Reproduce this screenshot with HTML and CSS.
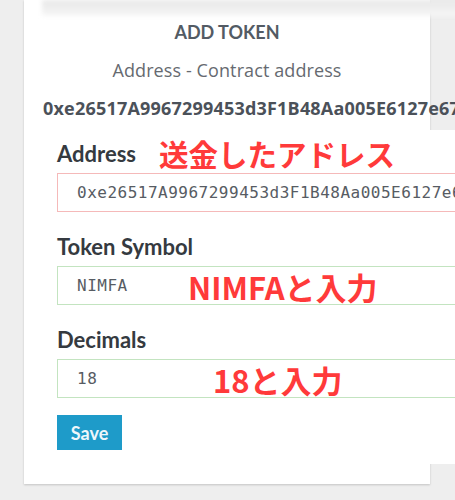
FILE: index.html
```html
<!DOCTYPE html>
<html lang="ja">
<head>
    <meta charset="UTF-8">
    <meta name="viewport" content="width=device-width, initial-scale=1.0">
    <title>Add Token</title>
    <link rel="stylesheet" href="styles.css">
</head>
<body>
    <div class="card">
        <div class="card-top"></div>
        <h1 class="title">ADD TOKEN</h1>
        <p class="subtitle">Address - Contract address</p>
        <p class="contract">0xe26517A9967299453d3F1B48Aa005E6127e67a3f</p>

        <form class="token-form">
            <div class="field">
                <div class="field-head">
                    <label>Address</label>
                    <span class="note">送金したアドレス</span>
                </div>
                <div class="input input-red">0xe26517A9967299453d3F1B48Aa005E6127e67a3f</div>
            </div>

            <div class="field">
                <div class="field-head">
                    <label>Token Symbol</label>
                </div>
                <div class="input input-green">
                    NIMFA
                    <span class="note note-symbol">NIMFAと入力</span>
                </div>
            </div>

            <div class="field">
                <div class="field-head">
                    <label>Decimals</label>
                </div>
                <div class="input input-green">
                    18
                    <span class="note note-decimals">18と入力</span>
                </div>
            </div>

            <button type="button" class="save-btn">Save</button>
        </form>
    </div>
</body>
</html>
```

FILE: styles.css
```css
body {
    margin: 0;
    background-color: #eeeeee;
    font-family: "Open Sans", Arial, sans-serif;
    overflow: hidden;
    height: 500px;
}
.card {
    margin-left: 24px;
    width: 406px;
    height: 484px;
    background-color: white;
    box-shadow: 0 1px 2px rgba(0, 0, 0, 0.18);
}
.card-top {
    height: 16px;
    margin-left: 18px;
    margin-right: -30px;
    background: linear-gradient(to bottom, #e8e8e8, #f1f1f1 70%, #f8f8f8);
    filter: blur(2px);
}
.title {
    margin: 4px 0 0;
    line-height: 24px;
    font-family: Lato, sans-serif;
    font-weight: 700;
    font-size: 18px;
    color: #535b64;
    text-align: center;
}
.subtitle {
    margin: 14px 0 0;
    line-height: 24px;
    font-size: 18px;
    letter-spacing: 0.1px;
    color: #666a70;
    text-align: center;
}
.contract {
    margin: 14px 0 0 19px;
    line-height: 24px;
    font-size: 18px;
    font-weight: 700;
    letter-spacing: 0.2px;
    color: #4b5159;
    white-space: nowrap;
}
.token-form {
    margin-top: 10px;
    margin-right: -40px;
    padding: 6px 0 14px 33px;
    background-color: white;
}
.field {
    margin-bottom: 17px;
}
.field-head {
    display: flex;
    align-items: center;
    height: 34px;
    margin-bottom: 3px;
}
.field-head label {
    font-family: Lato, sans-serif;
    font-weight: 700;
    font-size: 22px;
    color: #353a40;
}
.note {
    font-family: "Noto Sans CJK JP", sans-serif;
    font-weight: 700;
    font-size: 29.5px;
    color: #ff3a3a;
    margin-left: 23px;
}
.input {
    position: relative;
    display: flex;
    align-items: center;
    box-sizing: border-box;
    height: 39px;
    width: 430px;
    padding-left: 19px;
    font-family: "DejaVu Sans Mono", monospace;
    font-size: 16px;
    letter-spacing: 0.5px;
    color: #575c63;
    white-space: nowrap;
    overflow: hidden;
}
.input-red {
    border: 1.5px solid #f5b9b9;
}
.input-green {
    border: 1.5px solid #c3e4c0;
}
.note-symbol,
.note-decimals {
    position: absolute;
    top: 50%;
    transform: translateY(-50%);
    margin-left: 0;
    font-size: 31px;
    letter-spacing: 0;
}
.note-symbol {
    left: 130px;
}
.note-decimals {
    left: 155px;
}
.save-btn {
    display: block;
    width: 65px;
    height: 35px;
    padding: 0;
    border: none;
    background-color: #1e9bc9;
    color: #eef7fb;
    font-family: Lato, sans-serif;
    font-weight: 700;
    font-size: 18px;
    margin-top: 2px;
}
```
